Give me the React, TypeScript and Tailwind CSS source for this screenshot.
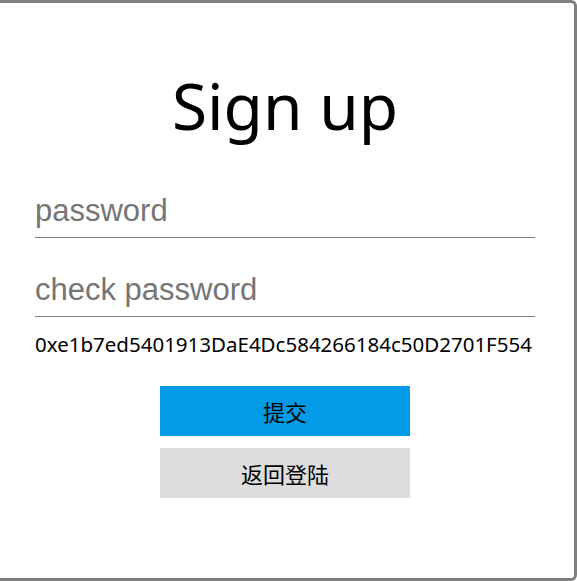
const App = () => {
  return (
    <div className="w-[577px] h-[581px] bg-white">
      <div className="h-[581px] w-[577px] border-[3px] border-l-0 border-[#808080] rounded-r-[6px] pl-[35px] pt-[63px] flex flex-col">
        <h1 className="w-[500px] text-center text-[64px] leading-[80px] font-['Noto_Sans',sans-serif] text-black">
          Sign up
        </h1>
        <div className="w-[500px] mt-[36px] flex flex-col">
          <input
            className="h-[56px] w-[500px] border-b border-[#808080] outline-none text-[31px] font-['Liberation_Sans',Arial,sans-serif] placeholder:text-[#757575] pt-[3px]"
            placeholder="password"
            type="password"
          />
          <input
            className="h-[56px] mt-[23px] w-[500px] border-b border-[#808080] outline-none text-[31px] font-['Liberation_Sans',Arial,sans-serif] placeholder:text-[#757575] pt-[3px]"
            placeholder="check password"
            type="password"
          />
          <p className="mt-[13px] text-[20.5px] leading-[28px] text-black font-['Noto_Sans',sans-serif] whitespace-nowrap">
            0xe1b7ed5401913DaE4Dc584266184c50D2701F554
          </p>
          <div className="mt-[28px] flex flex-col items-center gap-[12px]">
            <button className="w-[250px] h-[50px] bg-[#039be5] text-[22px] text-black font-['Noto_Sans_CJK_SC',sans-serif]">
              提交
            </button>
            <button className="w-[250px] h-[50px] bg-[#dddddd] text-[22px] text-black font-['Noto_Sans_CJK_SC',sans-serif]">
              返回登陆
            </button>
          </div>
        </div>
      </div>
    </div>
  );
};

export default App;
